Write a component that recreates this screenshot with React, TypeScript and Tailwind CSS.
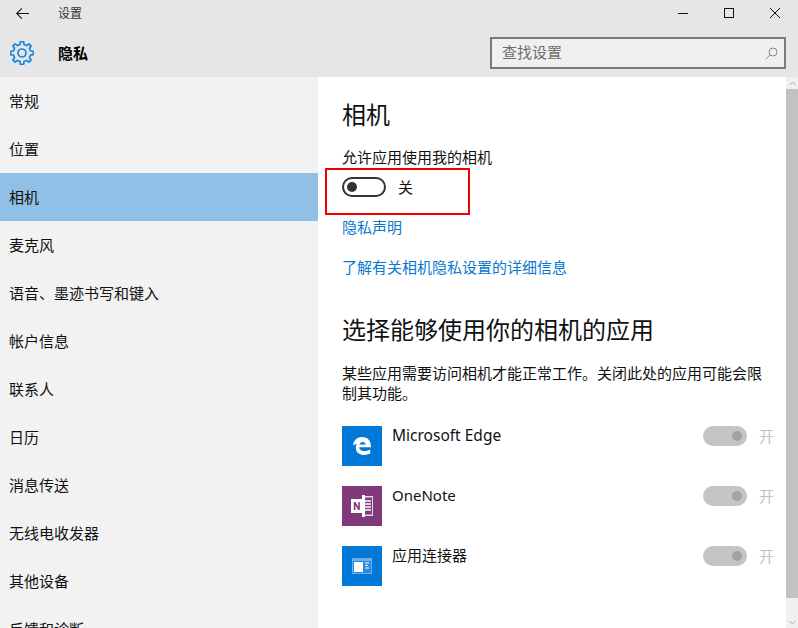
import React from "react";

const font = { fontFamily: '"Noto Sans", "Noto Sans CJK SC", sans-serif' };

const nav = ["常规", "位置", "相机", "麦克风", "语音、墨迹书写和键入", "帐户信息", "联系人", "日历", "消息传送", "无线电收发器", "其他设备", "反馈和诊断"];

function gearPath() {
  const pt = (r: number, deg: number) => {
    const a = ((deg - 90) * Math.PI) / 180;
    return `${(12 + r * Math.cos(a)).toFixed(2)} ${(12 + r * Math.sin(a)).toFixed(2)}`;
  };
  let d = "";
  for (let i = 0; i < 8; i++) {
    const c = i * 45;
    d += `${i === 0 ? "M" : "L"}${pt(8.8, c - 13)}L${pt(11.5, c - 8)}L${pt(11.5, c + 8)}L${pt(8.8, c + 13)}`;
  }
  return d + "Z";
}

function Gear() {
  return (
    <svg width="24" height="24" viewBox="0 0 24 24" fill="none" stroke="#1584e4" strokeWidth="1.7" strokeLinejoin="round">
      <circle cx="12" cy="12" r="4" />
      <path d={gearPath()} />
    </svg>
  );
}

function AppRow({ name, icon, bg, latin }: { name: string; icon: React.ReactNode; bg: string; latin?: boolean }) {
  return (
    <div className="flex h-[40px] items-start">
      <div className={`flex h-[40px] w-[40px] items-center justify-center ${bg}`}>{icon}</div>
      <div className={`ml-[10px] flex-1 leading-[20px] text-[#111] ${latin ? "-mt-px text-[15.5px]" : "-mt-px text-[15px]"}`}>{name}</div>
      <div className="flex items-center">
        <div className="flex h-[20px] w-[44px] items-center justify-end rounded-full bg-[#c4c4c4] pr-[5px]">
          <div className="h-[10px] w-[10px] rounded-full bg-[#a3a3a3]" />
        </div>
        <span className="ml-[12px] text-[15px] leading-[20px] text-[#c2c2c2]">开</span>
      </div>
    </div>
  );
}

export default function App() {
  return (
    <div className="flex h-[628px] w-[798px] flex-col overflow-hidden bg-white" style={font}>
      <header className="h-[77px] shrink-0 bg-[#e6e6e6]">
        <div className="flex h-[26px] items-center">
          <svg className="ml-[16px]" width="13" height="11" viewBox="0 0 13 11" fill="none" stroke="#111" strokeWidth="1.1">
            <path d="M13 5.500H1M5.800.4.700 5.500l5.100 5.100" />
          </svg>
          <span className="ml-[29px] mt-[1px] text-[12px] leading-[16px] text-[#333]">设置</span>
          <div className="ml-auto flex items-center">
            <div className="h-[1px] w-[10px] bg-[#111]" />
            <div className="ml-[36px] h-[10px] w-[10px] border border-[#111]" />
            <svg className="ml-[36px] mr-[18px]" width="10" height="10" viewBox="0 0 10 10" stroke="#111" strokeWidth="1">
              <path d="M0 0l10 10M10 0 0 10" />
            </svg>
          </div>
        </div>
        <div className="mt-[11px] flex h-[32px] items-center">
          <div className="ml-[10px]"><Gear /></div>
          <span className="ml-[24px] text-[15px] font-bold leading-[20px] text-black">隐私</span>
          <div className="ml-auto mr-[12px] flex h-[32px] w-[296px] items-center justify-between border-2 border-[#7a7a7a] bg-[#f0f0f0] pl-[10px] pr-[6px]">
            <span className="-mt-[2px] text-[15px] leading-[20px] text-[#6e6e6e]">查找设置</span>
            <svg width="13" height="13" viewBox="0 0 13 13" fill="none" stroke="#8a8a8a" strokeWidth="1">
              <circle cx="8" cy="5" r="4" />
              <path d="M5.200 7.800.8 12.200" />
            </svg>
          </div>
        </div>
      </header>
      <div className="flex min-h-0 flex-1">
        <nav className="h-full w-[318px] shrink-0 overflow-hidden bg-[#f2f2f2]">
          {nav.map((n) => (
            <div key={n} className={`flex h-[48px] shrink-0 items-center pl-[9px] text-[15px] text-[#111] ${n === "相机" ? "bg-[#91c0e7]" : ""}`}>
              {n}
            </div>
          ))}
        </nav>
        <main className="min-w-0 flex-1 pl-[24px] pr-[12px] pt-[20px]">
          <h1 className="text-[24px] leading-[36px] text-[#111]">相机</h1>
          <p className="mt-[14px] text-[15px] leading-[20px] text-[#111]">允许应用使用我的相机</p>
          <div className="relative mt-[10px] flex h-[20px] items-center">
            <div className="flex h-[20px] w-[44px] items-center rounded-full border-2 border-[#333] pl-[3px]">
              <div className="h-[10px] w-[10px] rounded-full bg-[#333]" />
            </div>
            <span className="ml-[12px] -mt-[1px] text-[15px] leading-[20px] text-[#111]">关</span>
            <div className="absolute left-[-17px] top-[-9px] h-[47px] w-[145px] border-2 border-[#f00000]" />
          </div>
          <a className="mt-[20px] block text-[15px] leading-[20px] text-[#0a78d2]">隐私声明</a>
          <a className="mt-[20px] block text-[15px] leading-[20px] text-[#0a78d2]">了解有关相机隐私设置的详细信息</a>
          <h2 className="mt-[35px] text-[24px] leading-[36px] text-[#111]">选择能够使用你的相机的应用</h2>
          <p className="mt-[15px] w-[424px] text-[15px] leading-[20px] text-[#111]">某些应用需要访问相机才能正常工作。关闭此处的应用可能会限制其功能。</p>
          <div className="mt-[23px] flex flex-col gap-[20px]">
            <AppRow
              latin
              name="Microsoft Edge"
              bg="bg-[#0078d7]"
              icon={
                <svg width="18" height="18" viewBox="0 0 18 18">
                  <path fill="#fff" d="M0 8.500C.6 3.400 4.200 0 9.300 0 14.800 0 18 3.700 18 10.200H6.300c.1 4.200 6.700 5 10.900 2.400v4c-6 2.700-14 1.500-14.400-5.700-.1-1.400.2-2.800 1-4C2.200 7 1 7.600 0 8.500Zm6.400-.9h6.300c-.1-3.500-5.500-3.500-6.300 0Z" />
                </svg>
              }
            />
            <AppRow
              name="OneNote"
              bg="bg-[#80397b]"
              icon={
                <svg width="24" height="22" viewBox="0 0 24 22">
                  <rect x="13" y="1" width="10" height="20" fill="#e6d5e4" />
                  <rect x="14" y="2.500" width="8" height="17" fill="#80397b" />
                  <path stroke="#fff" strokeWidth="1.400" d="M15 6h6M15 9h6M15 12h6M15 15h6" />
                  <path fill="#fff" d="M12 0h3v22h-3Z" />
                  <rect x="1" y="4" width="12" height="14" fill="#fff" />
                  <path fill="#80397b" d="M3.800 15V7h1.700l2.700 4.800V7h1.600v8H8.200L5.400 10.200V15Z" />
                </svg>
              }
            />
            <AppRow
              name="应用连接器"
              bg="bg-[#0078d7]"
              icon={
                <svg width="20" height="16" viewBox="0 0 20 16">
                  <rect width="20" height="16" fill="#6fb0e8" />
                  <rect x="1" y="3" width="18" height="12" fill="#2a8ae0" />
                  <rect x="2" y="4" width="9" height="10" fill="#fff" />
                  <path stroke="#fff" d="M13 5h4M13 7.500h3M13 10h4" />
                </svg>
              }
            />
          </div>
        </main>
        <div className="flex w-[12px] shrink-0 flex-col bg-[#f0f0f0]">
          <div className="flex h-[12px] items-center justify-center">
            <svg width="7" height="5" viewBox="0 0 7 5" fill="none" stroke="#aaa"><path d="M.5 4 3.500 1l3 3" /></svg>
          </div>
          <div className="h-[509px] bg-[#c2c2c2]" />
          <div className="mt-auto flex h-[12px] items-center justify-center">
            <svg width="7" height="5" viewBox="0 0 7 5" fill="none" stroke="#aaa"><path d="M.5 1 3.500 4l3-3" /></svg>
          </div>
        </div>
      </div>
    </div>
  );
}
